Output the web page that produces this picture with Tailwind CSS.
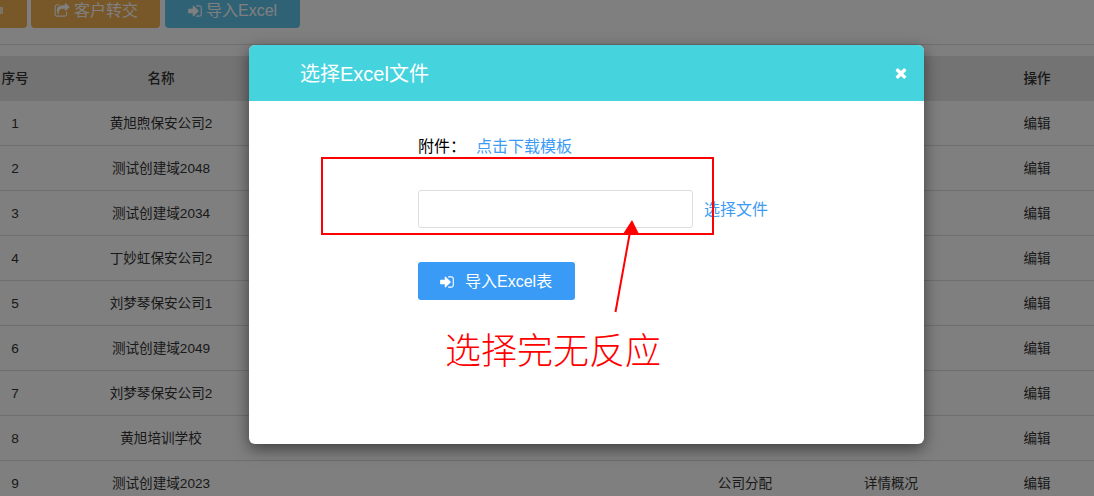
<!DOCTYPE html>
<html lang="zh-CN">
<head>
    <meta charset="UTF-8">
    <title>选择Excel文件</title>
    <script src="https://cdn.jsdelivr.net/npm/@tailwindcss/browser@4"></script>
</head>
<body class="relative w-[1094px] h-[496px] overflow-hidden bg-white text-[13.6px] text-[#333] font-['Liberation_Sans','Noto_Sans_CJK_SC',sans-serif]">

    <!-- Toolbar -->
    <div class="flex items-start h-[45px] border-b border-[#ddd] text-[16px] text-white">
        <div class="w-[27px] h-[28px] rounded-br-[4px] bg-[#f0ae50] pt-[7px]"><div class="w-[3px] h-[7px] bg-white/70"></div></div>
        <a class="flex items-center ml-[4px] w-[129px] h-[28px] pl-[23px] pb-[6px] rounded-b-[4px] bg-[#f0ae50]">
            <svg class="w-[16px] h-[16px] mr-[4px] fill-white" viewBox="0 0 1792 1792"><path d="M1472 989v259q0 119-84.5 203.5t-203.5 84.5h-832q-119 0-203.5-84.5t-84.5-203.5v-832q0-119 84.5-203.5t203.5-84.5h255q13 0 22.5 9.5t9.5 22.5q0 27-26 32-77 26-133 60-10 4-16 4h-112q-66 0-113 47t-47 113v832q0 66 47 113t113 47h832q66 0 113-47t47-113v-214q0-19 18-29 28-13 54-37 16-16 35-8 21 9 21 29zm237-496l-384 384q-18 19-45 19-12 0-25-5-39-17-39-59v-192h-160q-323 0-438 131-119 137-74 473 3 23-20 34-8 2-12 2-16 0-26-13-10-14-21-31t-39.5-68.5-49.5-99.5-38.5-114-17.5-122q0-49 3.5-91t14-90 28-88 47-81.5 68.5-74 94.5-61.5 124.5-48.5 159.5-30.5 196.5-11h160v-192q0-42 39-59 13-5 25-5 26 0 45 19l384 384q19 19 19 45t-19 45z"/></svg>
            客户转交
        </a>
        <a class="flex items-center ml-[5px] w-[135px] h-[28px] pl-[23px] pb-[6px] rounded-b-[4px] bg-[#60c4ec]">
            <svg class="w-[14px] h-[16px] mr-[4px] fill-white" viewBox="0 0 1536 1792"><path d="M1184 896q0 26-19 45l-544 544q-19 19-45 19t-45-19-19-45v-288h-448q-26 0-45-19t-19-45v-384q0-26 19-45t45-19h448v-288q0-26 19-45t45-19 45 19l544 544q19 19 19 45zm352-352v704q0 119-84.5 203.5t-203.5 84.5h-320q-13 0-22.5-9.5t-9.5-22.5q0-4-1-20t-.5-26.5 3-23.5 10-19.5 20.5-6.5h320q66 0 113-47t47-113v-704q0-66-47-113t-113-47h-312l-11.5-1-11.5-3-8-5.5-7-9-2-13.5q0-4-1-20t-.5-26.5 3-23.5 10-19.5 20.5-6.5h320q119 0 203.5 84.5t84.5 203.5z"/></svg>
            导入Excel
        </a>
    </div>

    <!-- Table -->
    <table class="mt-[11px] w-[1094px] table-fixed border-separate border-spacing-0 text-center">
        <colgroup>
            <col class="w-[30px]"><col class="w-[262px]"><col class="w-[396px]"><col class="w-[114px]"><col class="w-[178px]"><col class="w-[114px]">
        </colgroup>
        <thead>
            <tr class="h-[45px] bg-[#e6e6e6]">
                <th class="pt-[2px] font-medium">序号</th><th class="pt-[2px] font-medium">名称</th><th></th><th></th><th></th><th class="pt-[2px] font-medium">操作</th>
            </tr>
        </thead>
        <tbody id="rows"></tbody>
    </table>

    <!-- Backdrop -->
    <div class="absolute inset-0 bg-black/50"></div>

    <!-- Modal -->
    <div class="absolute left-[249px] top-[45px] w-[675px] h-[399px] rounded-[6px] overflow-hidden bg-white shadow-[0_5px_15px_rgba(0,0,0,0.5)]">
        <div class="flex items-center justify-between h-[56px] pl-[51px] pr-[16px] pt-[2px] bg-[#45d3dd] text-white">
            <h4 class="text-[20px]">选择Excel文件</h4>
            <svg class="w-[14px] h-[16px] fill-white" viewBox="0 0 1408 1792"><path d="M1298 1202q0 40-28 68l-136 136q-28 28-68 28t-68-28l-294-294-294 294q-28 28-68 28t-68-28l-136-136q-28-28-28-68t28-68l294-294-294-294q-28-28-28-68t28-68l136-136q28-28 68-28t68 28l294 294 294-294q28-28 68-28t68 28l136 136q28 28 28 68t-28 68l-294 294 294 294q28 28 28 68z"/></svg>
        </div>
        <div class="pl-[169px] pt-[34px] text-[16px]">
            <div class="flex h-[24px] items-center">
                <span class="w-[58px] text-black">附件：</span>
                <a class="text-[#3c9cf5]">点击下载模板</a>
            </div>
            <div class="flex items-center mt-[31px]">
                <div class="w-[275px] h-[38px] border border-[#ddd] rounded-[3px]"></div>
                <a class="ml-[12px] pt-[2px] -translate-x-px text-[#3c9cf5]">选择文件</a>
            </div>
            <a class="flex items-center mt-[34px] w-[157px] h-[38px] pl-[22px] pt-[2px] rounded-[3px] bg-[#399bf5] text-white">
                <svg class="w-[14px] h-[16px] mr-[11px] fill-white" viewBox="0 0 1536 1792"><path d="M1184 896q0 26-19 45l-544 544q-19 19-45 19t-45-19-19-45v-288h-448q-26 0-45-19t-19-45v-384q0-26 19-45t45-19h448v-288q0-26 19-45t45-19 45 19l544 544q19 19 19 45zm352-352v704q0 119-84.5 203.5t-203.5 84.5h-320q-13 0-22.5-9.5t-9.5-22.5q0-4-1-20t-.5-26.5 3-23.5 10-19.5 20.5-6.5h320q66 0 113-47t47-113v-704q0-66-47-113t-113-47h-312l-11.5-1-11.5-3-8-5.5-7-9-2-13.5q0-4-1-20t-.5-26.5 3-23.5 10-19.5 20.5-6.5h320q119 0 203.5 84.5t84.5 203.5z"/></svg>
                导入Excel表
            </a>
        </div>
    </div>

    <!-- Red annotation drawn on top of the screenshot -->
    <div class="absolute left-[321px] top-[157px] w-[393px] h-[78px] border-2 border-[#ff0000]"></div>
    <svg class="absolute inset-0 w-[1094px] h-[496px]" viewBox="0 0 1094 496">
        <line x1="615.5" y1="312" x2="630" y2="232" stroke="#ff0000" stroke-width="2"/>
        <polygon points="632,220 623,234 639,234" fill="#ff0000"/>
    </svg>
    <div class="absolute left-[445px] top-[326px] text-[36px] leading-[52px] font-light text-[#ff0000] whitespace-nowrap">选择完无反应</div>

    <script>
        const names = ['黄旭煦保安公司2', '测试创建域2048', '测试创建域2034', '丁妙虹保安公司2', '刘梦琴保安公司1', '测试创建域2049', '刘梦琴保安公司2', '黄旭培训学校', '测试创建域2023'];
        // only the last row shows past the bottom of the modal
        document.getElementById('rows').innerHTML = names.map((name, i) => `
            <tr class="h-[45px]">
                <td class="pt-[2px] border-b border-[#ddd]">${i + 1}</td>
                <td class="pt-[2px] border-b border-[#ddd]">${name}</td>
                <td class="pt-[2px] border-b border-[#ddd]"></td>
                <td class="pt-[2px] border-b border-[#ddd]">${i === 8 ? '公司分配' : ''}</td>
                <td class="pt-[2px] border-b border-[#ddd]">${i === 8 ? '详情概况' : ''}</td>
                <td class="pt-[2px] border-b border-[#ddd]">编辑</td>
            </tr>`).join('');
    </script>
</body>
</html>
